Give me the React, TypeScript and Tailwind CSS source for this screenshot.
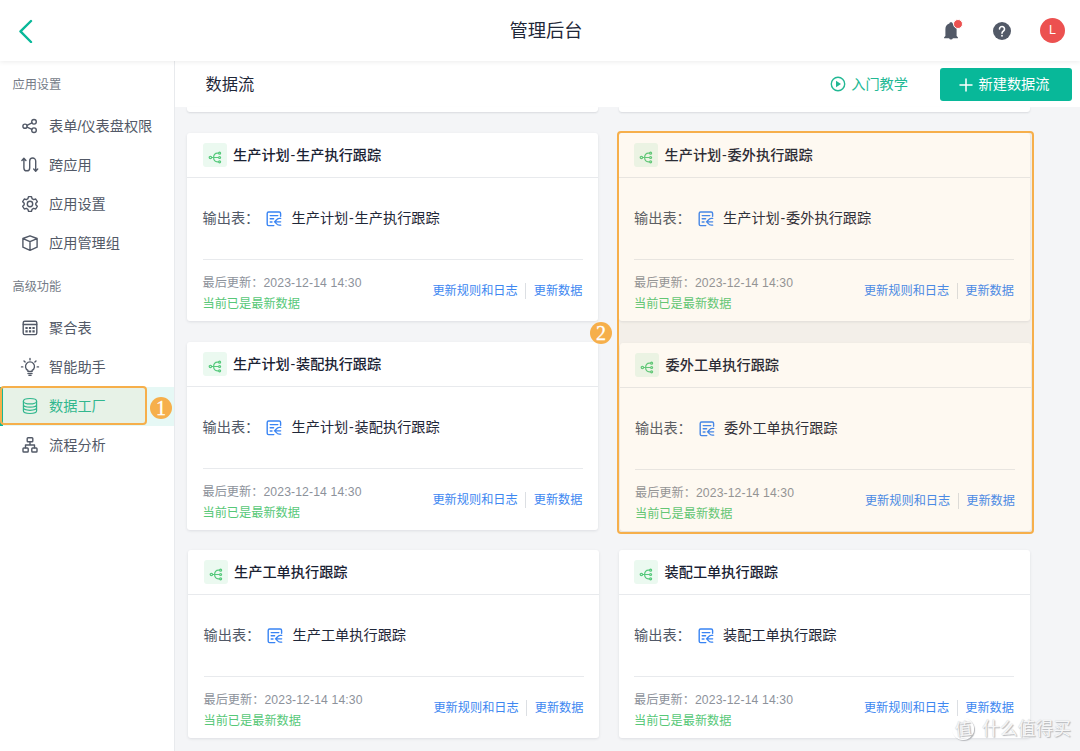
import type { ReactNode } from "react";

type FlowCardProps = {
  title: string;
  className?: string;
};

type MenuItemProps = {
  icon: ReactNode;
  label: string;
  active?: boolean;
};

const iconProps = {
  width: 18,
  height: 18,
  viewBox: "0 0 18 18",
  fill: "none",
  stroke: "currentColor",
  strokeWidth: 1.4,
  strokeLinecap: "round",
  strokeLinejoin: "round",
} as const;

const ShareIcon = () => (
  <svg {...iconProps}>
    <circle cx="4" cy="9.2" r="2.1" />
    <circle cx="13" cy="4.8" r="2.3" />
    <circle cx="13" cy="13.2" r="2.3" />
    <path d="M6 8.3l4.9-2.4M6 10.1l4.9 2.2" />
  </svg>
);

const CrossIcon = () => (
  <svg {...iconProps}>
    <path d="M.9 4.500L2.900 2.300l2 2.200M2.900 2.600v9.300a2.900 2.900 0 0 0 5.800 0V5a3 3 0 0 1 6 0v9.700M12.700 13l2 2.200 2-2.200" />
  </svg>
);

const GearIcon = () => (
  <svg {...iconProps}>
    <path d="M7.5 1.6h3l.6 2.1 1.5.9 2.1-.6 1.6 2.7L14.8 8.2v1.6l1.5 1.5-1.6 2.7-2.1-.6-1.5.9-.6 2.1h-3l-.6-2.1-1.5-.9-2.1.6-1.6-2.7 1.5-1.5V8.2L1.7 6.7 3.3 4l2.1.6 1.500-.9z" />
    <circle cx="9" cy="9" r="2.7" />
  </svg>
);

const BoxIcon = () => (
  <svg {...iconProps}>
    <path d="M9 1.8l7.1 2.7v8.7L9 16.3l-7.1-3.1V4.5zM2 4.6l7 3 7-3M9 7.6v8.5" />
  </svg>
);

const TableIcon = () => (
  <svg {...iconProps}>
    <rect x="2.2" y="2.2" width="13.6" height="13.4" rx="1.6" />
    <path d="M2.4 5.5h13.2" strokeWidth="1.5" />
    <path d="M5.5 9h.1M9 9h.1M12.5 9h.1M5.5 12.3h.1M9 12.3h.1M12.5 12.3h.1" strokeWidth="2.2" strokeLinecap="square" />
  </svg>
);

const BulbIcon = () => (
  <svg {...iconProps} overflow="visible">
    <path d="M6.9 13.4v-1a4.5 4.5 0 1 1 4.2 0v1zM7 15.5h4M8 17.400h2" />
    <path d="M9 .4v1.500M3 2.900l1.100 1.100M15 2.900l-1.100 1.100M.5 8.900h1.300M16.200 8.900h1.300" />
  </svg>
);

const DatabaseIcon = () => (
  <svg {...iconProps} strokeWidth="1.2">
    <ellipse cx="9" cy="4.2" rx="6.6" ry="2.7" />
    <path d="M2.4 4.2v9.6c0 1.5 3 2.7 6.6 2.7s6.6-1.2 6.6-2.7V4.2M2.4 7.4c0 1.5 3 2.7 6.6 2.7s6.6-1.2 6.6-2.7M2.4 10.6c0 1.5 3 2.7 6.6 2.7s6.6-1.2 6.6-2.7" />
  </svg>
);

const FlowIcon = () => (
  <svg {...iconProps}>
    <rect x="6.2" y="1.7" width="5.6" height="4.1" rx=".8" />
    <rect x="2" y="12" width="5.2" height="4" rx=".8" />
    <rect x="10.8" y="12" width="5.2" height="4" rx=".8" />
    <path d="M9 6v3M4.5 11.8V9h9v2.8" />
  </svg>
);

const NodesIcon = () => (
  <svg className="mt-1 text-[#55c97b]" width="14" height="13" viewBox="0 0 14 13" fill="none" stroke="currentColor" strokeWidth="1.2">
    <circle cx="2.4" cy="6.5" r="1.2" />
    <circle cx="11.6" cy="2.2" r="1" />
    <circle cx="11.6" cy="6.5" r="1" />
    <circle cx="11.6" cy="10.8" r="1" />
    <path d="M3.6 6.5h7M10.600 2.200H9.400C7 2.200 5.600 4 5.600 6.500s1.400 4.300 3.800 4.300h1.200" />
  </svg>
);

const FormIcon = () => (
  <svg className="text-[#3984f3]" width="16" height="16" viewBox="0 0 16 16" fill="none" stroke="currentColor" strokeWidth="1.4" strokeLinecap="round" strokeLinejoin="round">
    <path d="M14.600 5.200V2.400c0-.8-.6-1.400-1.400-1.400H2.600c-.8 0-1.400.6-1.400 1.400v10.800c0 .8.6 1.400 1.400 1.400h5.200" />
    <path d="M4.200 4.600h7.600M4.200 7.800h3.400M4.200 11h1.800" />
    <path d="M14.700 7.400h-1.500c-2.200 0-3 2-4.600 3.400 1.600 1.400 2.400 3.400 4.600 3.400h1.500M8.400 10.800h6.300" strokeWidth="1.3" />
  </svg>
);

const MenuItem = ({ icon, label, active }: MenuItemProps) => (
  <div
    className={
      active
        ? "flex h-[39px] items-center border-l-[3px] border-[#08b899] bg-[#e6f8f5] pb-px pl-[18px] text-[#22b894]"
        : "flex h-[39px] items-center pb-px pl-[21px] text-[#525967]"
    }
  >
    {icon}
    <span className="ml-[10px] pt-0.5 text-[14.2px]">{label}</span>
  </div>
);

// the hyphen is drawn a little wider than the Latin font gives
const Title = ({ text }: { text: string }) => {
  const [head, tail] = text.split("-");
  return (
    <>
      {head}
      {tail && <span className="mx-[0.8px]">-</span>}
      {tail}
    </>
  );
};

const FlowCard = ({ title, className = "" }: FlowCardProps) => (
  <div className={`h-[188px] w-[411px] shrink-0 rounded-[3px] bg-white shadow-[0_1px_3px_rgba(20,30,50,0.10)] ${className}`}>
    <div className="flex h-[45px] items-center border-b border-[#e8eaed] px-[15.5px]">
      <div className="flex size-6 items-center justify-center rounded-[3px] bg-[#ebf9f0]">
        <NodesIcon />
      </div>
      <h2 className="ml-[6.5px] pt-0.5 text-[14.2px] font-medium text-[#1a2233]">
        <Title text={title} />
      </h2>
    </div>
    <div className="mx-[15.5px] flex h-[82px] items-center border-b border-[#e8eaed] text-[14.2px]">
      <span className="w-[63.5px] pt-px text-[#525967]">输出表：</span>
      <FormIcon />
      <span className="ml-[9.5px] pt-px text-[#1f2738]">
        <Title text={title} />
      </span>
    </div>
    <div className="mx-[15.5px] flex justify-between text-[12.2px]">
      <div className="pt-[13px]">
        <p className="h-[21px] leading-[21px] text-[#8d929b]">
          最后更新：<span className="tracking-[0.12px]">2023-12-14 14:30</span>
        </p>
        <p className="h-[21px] leading-[21px] text-[#57c878]">当前已是最新数据</p>
      </div>
      <div className="flex h-[62px] items-center text-[#3d87f1]">
        <span className="pt-px">更新规则和日志</span>
        <span className="mx-[7.500px] h-4 w-px bg-[#dcdfe3]" />
        <span className="pt-px">更新数据</span>
      </div>
    </div>
  </div>
);

const Header = () => (
  <header className="relative z-10 grid h-[61px] shrink-0 grid-cols-3 items-center bg-white shadow-[0_1px_5px_rgba(0,0,0,0.08)]">
    <svg className="ml-[18px]" width="16" height="24" viewBox="0 0 16 24" fill="none" stroke="#08b899" strokeWidth="2.4" strokeLinecap="round" strokeLinejoin="round">
      <path d="M13 2L2.5 12.4 13 23" />
    </svg>
    <h1 className="pt-px pl-3 text-center text-[18.3px] text-[#1f2738]">管理后台</h1>
    <div className="flex items-center justify-end pr-[15px]">
      <div className="relative">
        <svg width="16" height="20" viewBox="0 0 16 20" fill="#525967">
          <path d="M8 1.2c.9 0 1.5.5 1.6 1.2 2.5.8 4 2.8 4 5.5v7.2l1.3 1.2v.9h-5a2 2 0 0 1-3.8 0h-5v-.9l1.3-1.2V7.9c0-2.7 1.5-4.7 4-5.5.1-.7.7-1.2 1.6-1.2z" />
        </svg>
        <span className="absolute -top-[2px] left-[10px] size-[10px] rounded-full border border-white bg-[#ec5150]" />
      </div>
      <div className="ml-[34px] flex size-[18px] items-center justify-center rounded-full bg-[#525967]">
        <svg width="18" height="18" viewBox="0 0 18 18" fill="none" stroke="white" strokeWidth="1.6" strokeLinecap="round">
          <path d="M6.500 7a2.500 2.500 0 1 1 4.100 1.900C9.600 9.700 9 10 9 11.200" />
          <path d="M9 13.700v.1" strokeWidth="1.800" />
        </svg>
      </div>
      <div className="ml-[29px] flex size-[25px] items-center justify-center rounded-full bg-[#ec5150] text-[12.5px] text-white">L</div>
    </div>
  </header>
);

const Sidebar = () => (
  <aside className="w-[175px] shrink-0 border-r border-[#e8eaed] bg-white pt-px">
    <p className="flex h-[45px] items-center pt-0.5 pl-[12.5px] text-[12.2px] text-[#747b87]">应用设置</p>
    <MenuItem icon={<ShareIcon />} label="表单/仪表盘权限" />
    <MenuItem icon={<CrossIcon />} label="跨应用" />
    <MenuItem icon={<GearIcon />} label="应用设置" />
    <MenuItem icon={<BoxIcon />} label="应用管理组" />
    <p className="flex h-[46px] items-center pt-0.5 pl-[12.5px] text-[12.2px] text-[#747b87]">高级功能</p>
    <MenuItem icon={<TableIcon />} label="聚合表" />
    <MenuItem icon={<BulbIcon />} label="智能助手" />
    <MenuItem icon={<DatabaseIcon />} label="数据工厂" active />
    <MenuItem icon={<FlowIcon />} label="流程分析" />
  </aside>
);

const Toolbar = () => (
  <div className="flex h-[46px] shrink-0 items-center bg-white pt-px pr-2 pl-[30.5px]">
    <h2 className="grow text-[16.3px] text-[#1f2738]">数据流</h2>
    <div className="flex items-center text-[14.2px] text-[#22b894]">
      <svg width="16" height="16" viewBox="0 0 16 16" fill="none" stroke="currentColor" strokeWidth="1.4">
        <circle cx="8" cy="8" r="6.7" />
        <path d="M6 4.800v6.400L11 8z" fill="currentColor" stroke="none" />
      </svg>
      <span className="ml-[5px] pt-px">入门教学</span>
    </div>
    <button className="ml-8 flex h-[33px] w-[132px] items-center rounded-[3px] bg-[#08b899] pl-[18.500px] text-[14.2px] text-white">
      <svg width="14" height="14" viewBox="0 0 14 14" stroke="white" strokeWidth="1.5" strokeLinecap="round">
        <path d="M7 1v12M1 7h12" />
      </svg>
      <span className="ml-[6px] pt-px">新建数据流</span>
    </button>
  </div>
);

const StepBadge = ({ step, className }: { step: number; className: string }) => (
  <span
    className={`absolute z-20 flex size-[22px] items-center justify-center rounded-full bg-[#f6af4b] pb-px font-['Liberation_Serif',serif] text-[20px] leading-none text-white [-webkit-text-stroke:0.3px_white] ${className}`}
  >
    {step}
  </span>
);

const PreviousCard = () => (
  <div className="h-[5px] w-[411px] rounded-b-[3px] bg-white shadow-[0_1px_2px_rgba(20,30,50,0.12)]" />
);

export default function App() {
  return (
    <div className="relative flex h-[751px] w-[1080px] flex-col overflow-hidden bg-[#f4f5f7] font-['Liberation_Sans','Noto_Sans_CJK_SC',sans-serif] whitespace-nowrap">
      <Header />
      <div className="flex min-h-0 grow">
        <Sidebar />
        <main className="flex min-w-0 grow flex-col">
          <Toolbar />
          <div className="flex gap-[20.5px] pl-3">
            <div className="flex w-[411px] flex-col">
              <PreviousCard />
              <FlowCard title="生产计划-生产执行跟踪" className="mt-[21px]" />
              <FlowCard title="生产计划-装配执行跟踪" className="mt-[21px]" />
              <FlowCard title="生产工单执行跟踪" className="mt-[20px] ml-px" />
            </div>
            <div className="flex w-[411px] flex-col">
              <PreviousCard />
              <FlowCard title="生产计划-委外执行跟踪" className="mt-[21px]" />
              <FlowCard title="委外工单执行跟踪" className="mt-[22px] ml-px" />
              <FlowCard title="装配工单执行跟踪" className="mt-[19px]" />
            </div>
          </div>
        </main>
      </div>

      <div className="absolute top-[386px] left-0 z-20 h-[39px] w-[147px] rounded-[4px] border-2 border-[#f6af4b] bg-[#f6af4b]/8" />
      <StepBadge step={1} className="top-[397px] left-[150px]" />
      <div className="absolute top-[131px] left-[617px] z-20 h-[403px] w-[417px] rounded-[4px] border-2 border-[#f6af4b] bg-[#f6af4b]/8" />
      <StepBadge step={2} className="top-[322px] left-[590px]" />

      <div className="absolute right-[9px] bottom-[11px] z-20 flex items-center gap-2 text-[#f6f6f7] [text-shadow:1px_1px_1px_#b5b7ba,0_0_1px_#c5c7ca]">
        <span className="flex size-[22px] items-center justify-center rounded-full border border-white text-[17px] leading-none shadow-[1px_1px_1px_#b5b7ba]">
          <span className="-rotate-6">值</span>
        </span>
        <span className="text-[17.8px] leading-[22px]">什么值得买</span>
      </div>
    </div>
  );
}
